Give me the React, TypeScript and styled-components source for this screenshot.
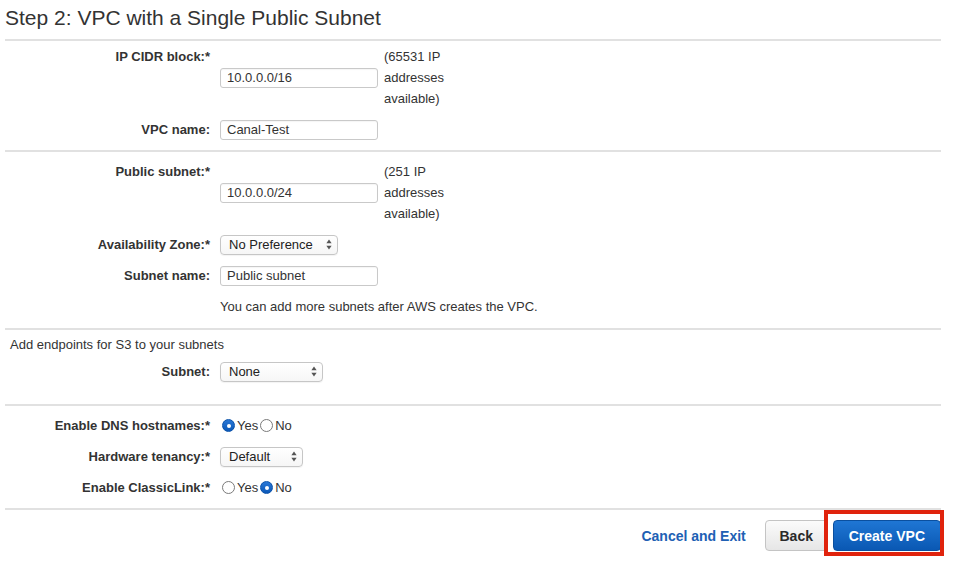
import React from "react";
import styled, { createGlobalStyle, css } from "styled-components";

const GlobalStyle = createGlobalStyle`
  html, body {
    margin: 0;
    background: #ffffff;
    font-family: "Liberation Sans", Arial, Helvetica, sans-serif;
    color: #333333;
  }
`;

const Page = styled.div`
  width: 936px;
  margin-left: 5px;
`;

const Title = styled.h1`
  margin: 0;
  padding: 6px 0 9px;
  font-size: 21px;
  line-height: 24px;
  font-weight: normal;
  color: #333333;
  border-bottom: 2px solid #e1e1e1;
`;

const Section = styled.section<{ $pt: number; $pb: number; $gap: number }>`
  display: flex;
  flex-direction: column;
  gap: ${(p) => p.$gap}px;
  padding-top: ${(p) => p.$pt}px;
  padding-bottom: ${(p) => p.$pb}px;
  border-bottom: 2px solid #e1e1e1;
`;

const Row = styled.div`
  display: flex;
  align-items: flex-start;
  font-size: 13px;
  line-height: 21px;
`;

const Label = styled.div`
  width: 205px;
  flex-shrink: 0;
  text-align: right;
  font-weight: bold;
  color: #333333;
`;

const Control = styled.div`
  margin-left: 10px;
  align-self: center;
  display: flex;
  align-items: center;
`;

const Note = styled.div`
  margin-left: 6px;
  width: 64px;
  color: #333333;
`;

const Hint = styled.div`
  margin-left: 215px;
  font-size: 13px;
  line-height: 21px;
`;

const SectionText = styled.div`
  padding-left: 5px;
  font-size: 13px;
  line-height: 21px;
`;

const TextInput = styled.input`
  width: 158px;
  height: 20px;
  box-sizing: border-box;
  border: 1px solid #c9c9c9;
  border-radius: 3px;
  padding: 0 6px;
  margin: 0;
  font-family: "Liberation Sans", Arial, Helvetica, sans-serif;
  font-size: 13px;
  color: #333333;
  background: #ffffff;
  box-shadow: inset 0 1px 1px rgba(0, 0, 0, 0.04);
  outline: none;
`;

const SelectBox = styled.div<{ $width: number }>`
  width: ${(p) => p.$width}px;
  height: 20px;
  box-sizing: border-box;
  display: flex;
  align-items: center;
  justify-content: space-between;
  padding: 0 5px 0 8px;
  border: 1px solid #c6c6c6;
  border-radius: 4px;
  background: linear-gradient(#ffffff, #f6f6f6);
  box-shadow: 0 1px 1px rgba(0, 0, 0, 0.05);
  font-size: 13px;
  color: #222222;
`;

const Arrows = () => (
  <svg width="6" height="11" viewBox="0 0 6 11">
    <path d="M3 0.5 L5.6 4.2 H0.4 Z" fill="#555" />
    <path d="M3 10.5 L5.6 6.8 H0.4 Z" fill="#555" />
  </svg>
);

const RadioOption = styled.span`
  display: inline-flex;
  align-items: center;
  margin-left: 2px;
  font-size: 13px;
  color: #333333;
`;

const RadioDot = styled.span<{ $checked: boolean }>`
  width: 13px;
  height: 13px;
  box-sizing: border-box;
  border-radius: 50%;
  margin-right: 2px;
  display: inline-flex;
  align-items: center;
  justify-content: center;
  ${(p) =>
    p.$checked
      ? css`
          background: linear-gradient(#2a78d6, #0b58b8);
          border: 1px solid #0a52aa;
          &::after {
            content: "";
            width: 4px;
            height: 4px;
            border-radius: 50%;
            background: #ffffff;
          }
        `
      : css`
          background: #ffffff;
          border: 1px solid #7a7a7a;
        `}
`;

const Footer = styled.div`
  display: flex;
  justify-content: flex-end;
  align-items: center;
  padding: 10px 0 11px;
`;

const LinkButton = styled.a`
  font-size: 14px;
  font-weight: bold;
  color: #2060b4;
  text-decoration: none;
  margin-right: 19px;
  cursor: pointer;
`;

const Button = styled.button<{ $primary?: boolean }>`
  display: block;
  height: 31px;
  box-sizing: border-box;
  border-radius: 4px;
  font-family: "Liberation Sans", Arial, Helvetica, sans-serif;
  font-size: 14px;
  font-weight: bold;
  margin: 0;
  cursor: pointer;
  ${(p) =>
    p.$primary
      ? css`
          padding: 0 15px;
          color: #ffffff;
          border: 1px solid #0a4f9f;
          background: linear-gradient(#1f76d4, #0a58b3);
        `
      : css`
          width: 63px;
          padding: 0;
          color: #2a2a2a;
          border: 1px solid #c4c4c4;
          background: linear-gradient(#fbfbfb, #e6e6e6);
        `}
`;

const Highlight = styled.div`
  position: relative;
  margin-left: 5px;
  height: 31px;
  &::after {
    content: "";
    position: absolute;
    top: -10px;
    left: -9px;
    width: 120px;
    height: 46px;
    box-sizing: border-box;
    border: 4px solid #e0230d;
    pointer-events: none;
    z-index: 2;
  }
`;

const Radio = ({ checked, label }: { checked: boolean; label: string }) => (
  <RadioOption>
    <RadioDot $checked={checked} />
    {label}
  </RadioOption>
);

const Select = ({ value, width }: { value: string; width: number }) => (
  <SelectBox $width={width}>
    <span>{value}</span>
    <Arrows />
  </SelectBox>
);

export default function App() {
  return (
    <Page>
      <GlobalStyle />
      <Title>Step 2: VPC with a Single Public Subnet</Title>

      <Section $pt={5} $pb={10} $gap={10}>
        <Row>
          <Label>IP CIDR block:*</Label>
          <Control>
            <TextInput readOnly value="10.0.0.0/16" />
          </Control>
          <Note>(65531 IP addresses available)</Note>
        </Row>
        <Row>
          <Label>VPC name:</Label>
          <Control>
            <TextInput readOnly value="Canal-Test" />
          </Control>
        </Row>
      </Section>

      <Section $pt={9} $pb={11} $gap={10}>
        <Row>
          <Label>Public subnet:*</Label>
          <Control>
            <TextInput readOnly value="10.0.0.0/24" />
          </Control>
          <Note>(251 IP addresses available)</Note>
        </Row>
        <Row>
          <Label>Availability Zone:*</Label>
          <Control>
            <Select value="No Preference" width={118} />
          </Control>
        </Row>
        <Row>
          <Label>Subnet name:</Label>
          <Control>
            <TextInput readOnly value="Public subnet" />
          </Control>
        </Row>
        <Hint>You can add more subnets after AWS creates the VPC.</Hint>
      </Section>

      <Section $pt={4} $pb={22} $gap={6}>
        <SectionText>Add endpoints for S3 to your subnets</SectionText>
        <Row>
          <Label>Subnet:</Label>
          <Control>
            <Select value="None" width={103} />
          </Control>
        </Row>
      </Section>

      <Section $pt={9} $pb={10} $gap={10}>
        <Row>
          <Label>Enable DNS hostnames:*</Label>
          <Control>
            <Radio checked label="Yes" />
            <Radio checked={false} label="No" />
          </Control>
        </Row>
        <Row>
          <Label>Hardware tenancy:*</Label>
          <Control>
            <Select value="Default" width={83} />
          </Control>
        </Row>
        <Row>
          <Label>Enable ClassicLink:*</Label>
          <Control>
            <Radio checked={false} label="Yes" />
            <Radio checked label="No" />
          </Control>
        </Row>
      </Section>

      <Footer>
        <LinkButton>Cancel and Exit</LinkButton>
        <Button>Back</Button>
        <Highlight>
          <Button $primary>Create VPC</Button>
        </Highlight>
      </Footer>
    </Page>
  );
}
